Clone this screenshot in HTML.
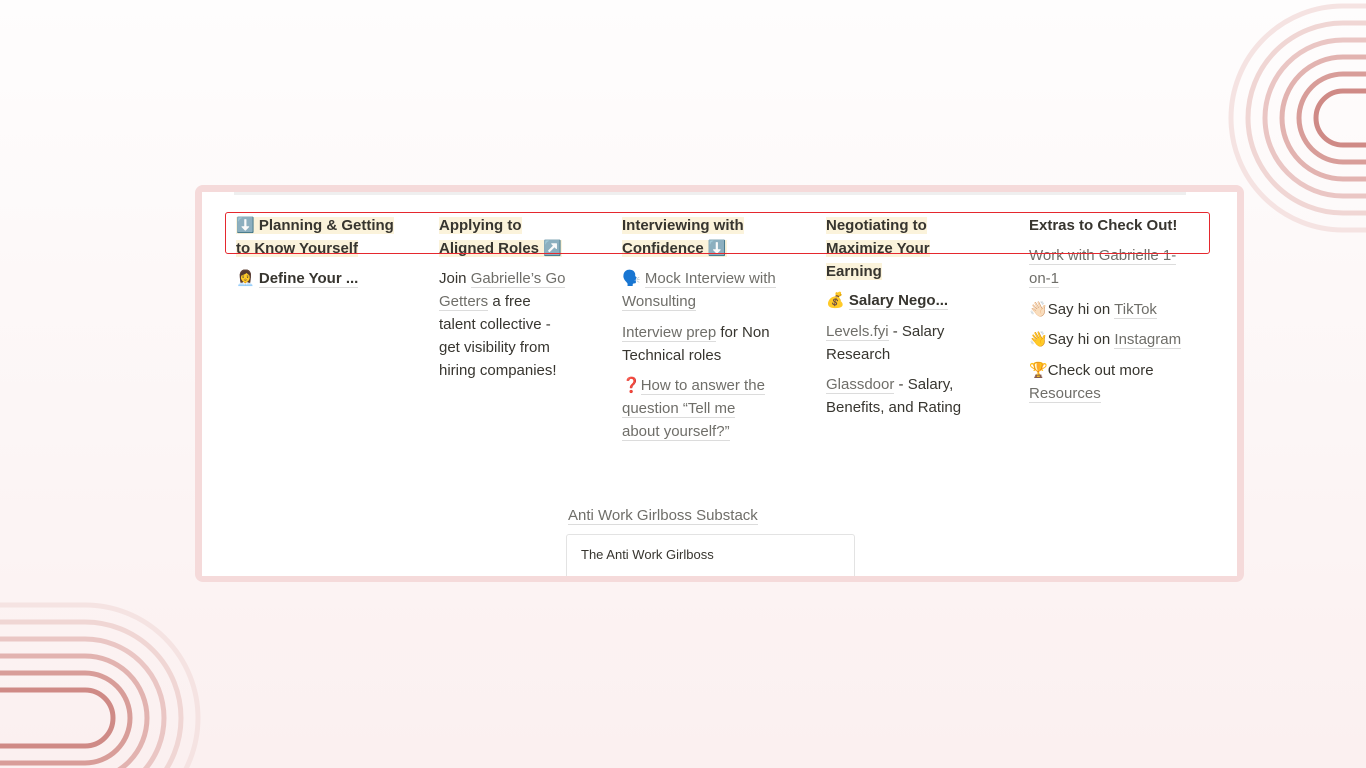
<!DOCTYPE html>
<html><head><meta charset="utf-8"><style>
*{margin:0;padding:0;box-sizing:border-box}
body{width:1366px;height:768px;overflow:hidden;position:relative;font-family:"Liberation Sans",sans-serif;background:linear-gradient(180deg,#fefdfd 0%,#fbf0f0 100%);color:#37352f}
.card{position:absolute;left:195px;top:185px;width:1049px;height:397px;background:#f5dada;border-radius:8px}
.inner{position:absolute;left:202px;top:192px;width:1035px;height:384px;background:#fff;overflow:hidden}
.bar{position:absolute;left:234px;top:192px;width:952px;height:3px;background:#efefef}
.red{position:absolute;left:225px;top:212px;width:985px;height:42px;border:1.5px solid #e5282e;border-radius:3px}
.b{position:absolute;font-size:15px;line-height:23px}
.h{font-weight:bold}
.h span{background:#fbf3db}
.l{color:#6f6e69;border-bottom:1px solid #dcdcdc}
.p{margin-bottom:7.5px}
.e{font-size:15px}
.sub{position:absolute;left:364px;top:342px;width:289px;height:50px;border:1px solid #e3e3e3;border-radius:3px;background:#fff}
</style></head><body>
<svg style="position:absolute;left:0;top:0" width="1366" height="768">
<g fill="none" stroke-width="5">
<path d="M1366 91 H1343 A27 27 0 0 0 1343 145 H1366" stroke="#cf8a86"/>
<path d="M1366 74 H1343 A44 44 0 0 0 1343 162 H1366" stroke="#d89d99"/>
<path d="M1366 57 H1343 A61 61 0 0 0 1343 179 H1366" stroke="#e2b3b0"/>
<path d="M1366 40 H1343 A78 78 0 0 0 1343 196 H1366" stroke="#eac6c4"/>
<path d="M1366 23 H1343 A95 95 0 0 0 1343 213 H1366" stroke="#f0d6d4"/>
<path d="M1366 6 H1343 A112 112 0 0 0 1343 230 H1366" stroke="#f5e3e2"/>
<path d="M0 690 H85 A28 28 0 0 1 85 746 H0" stroke="#cf8a86"/>
<path d="M0 673 H85 A45 45 0 0 1 85 763 H0" stroke="#d89d99"/>
<path d="M0 656 H85 A62 62 0 0 1 85 780 H0" stroke="#e2b3b0"/>
<path d="M0 639 H85 A79 79 0 0 1 85 797 H0" stroke="#eac6c4"/>
<path d="M0 622 H85 A96 96 0 0 1 85 814 H0" stroke="#f0d6d4"/>
<path d="M0 605 H85 A113 113 0 0 1 85 831 H0" stroke="#f5e3e2"/>
</g></svg>
<div class="card"></div>
<div class="inner"><div class="sub"><div style="position:absolute;left:14px;top:12px;font-size:13px;color:#37352f">The Anti Work Girlboss</div></div></div>
<div class="bar"></div>
<div class="b h" style="left:236px;top:214px;width:170px"><span>⬇️ Planning &amp; Getting to Know Yourself</span></div>
<div class="b" style="left:236px;top:267px;width:180px;font-weight:bold"><span class="e">👩‍💼</span> <span style="border-bottom:1px solid #dcdcdc">Define Your ...</span></div>
<div class="b h" style="left:439px;top:214px;width:140px"><span>Applying to Aligned Roles ↗️</span></div>
<div class="b" style="left:439px;top:267px;width:132px">Join <span class="l">Gabrielle’s Go Getters</span> a free talent collective - get visibility from hiring companies!</div>
<div class="b h" style="left:622px;top:214px;width:150px"><span>Interviewing with Confidence ⬇️</span></div>
<div class="b" style="left:622px;top:267px;width:160px">
<div class="p"><span class="e">🗣️</span> <span class="l">Mock Interview with Wonsulting</span></div>
<div class="p"><span class="l">Interview prep</span> for Non Technical roles</div>
<div class="p" style="width:150px"><span class="e" style="color:#e0252b">❓</span><span class="l">How to answer the question “Tell me about yourself?”</span></div></div>
<div class="b h" style="left:826px;top:214px;width:130px"><span>Negotiating to Maximize Your Earning</span></div>
<div class="b" style="left:826px;top:289px;width:160px">
<div class="p" style="font-weight:bold"><span class="e">💰</span> <span style="border-bottom:1px solid #dcdcdc">Salary Nego...</span></div>
<div class="p"><span class="l">Levels.fyi</span> - Salary Research</div>
<div class="p"><span class="l">Glassdoor</span> - Salary, Benefits, and Rating</div></div>
<div class="b h" style="left:1029px;top:214px;width:170px"><span style="background:none">Extras to Check Out!</span></div>
<div class="b" style="left:1029px;top:244px;width:165px">
<div class="p"><span class="l">Work with Gabrielle 1-on-1</span></div>
<div class="p"><span class="e">👋🏻</span>Say hi on <span class="l">TikTok</span></div>
<div class="p"><span class="e">👋</span>Say hi on <span class="l">Instagram</span></div>
<div class="p"><span class="e">🏆</span>Check out more <span class="l">Resources</span></div></div>
<div class="b" style="left:568px;top:504px"><span class="l">Anti Work Girlboss Substack</span></div>
<div class="red"></div>
</body></html>
